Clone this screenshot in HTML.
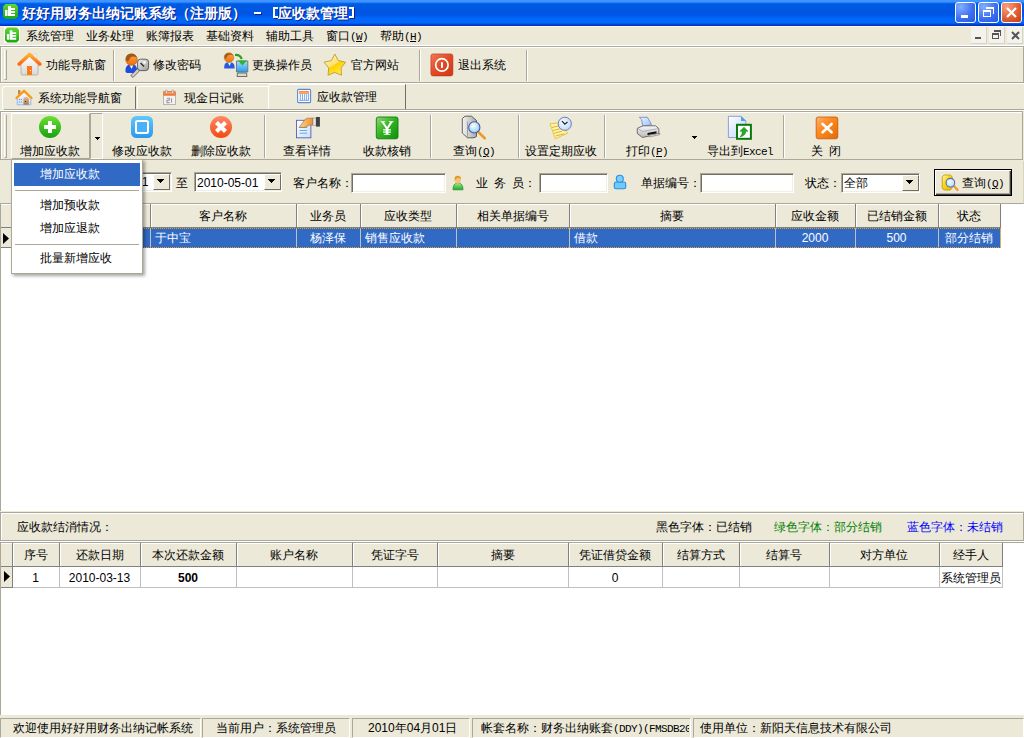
<!DOCTYPE html>
<html><head><meta charset="utf-8">
<style>
*{box-sizing:border-box}
html,body{margin:0;padding:0}
body{width:1024px;height:738px;overflow:hidden;position:relative;background:#ECE9D8;font-family:"Liberation Sans",sans-serif;font-size:12px;color:#000;line-height:12px}
.a{position:absolute;white-space:nowrap}
#title{left:0;top:0;width:1024px;height:26px;background:linear-gradient(to bottom,#4293ff 0px,#4293ff 2px,#0072ff 3px,#005be0 4px,#0058e0 8px,#0055e5 15px,#0060f5 17px,#0068f8 19px,#0066f5 23px,#0035c8 25px,#0035c8 26px)}
#title .t{left:22px;top:6px;color:#fff;font-weight:bold;font-size:14px;line-height:14px;text-shadow:1px 1px 0 #0a1e8c}
.tb{top:2px;width:21px;height:21px;border:1px solid #fff;border-radius:3px}
.menu .a{top:30px}
.h{font-family:"Liberation Mono",monospace;font-size:11px;letter-spacing:-0.6px}
.sep{width:2px;border-left:1px solid #aca899;border-right:1px solid #fff}
.tab{height:23px;border-left:1px solid #fff;border-top:1px solid #fff;border-right:1px solid #716f64;border-radius:3px 0 0 0;background:#ECE9D8}
.hd{background:#ECE9D8;border-right:1px solid #808080;border-bottom:1px solid #808080;box-shadow:inset 1px 1px 0 #fff;text-align:center;line-height:23px;height:24px}
.cell{height:21px;line-height:20px;border-right:1px solid #c0c0c0;padding-left:4px}
.inp{background:#fff;border:1px solid #7f9db9;box-shadow:inset 1px 1px 0 #808080}
.sunk{border:1px solid;border-color:#aca899 #fff #fff #aca899;box-shadow:inset 1px 1px 0 #716f64,inset -1px -1px 0 #f1efe2;background:#fff}
.cbtn{background:#ECE9D8;border:1px solid;border-color:#fff #716f64 #716f64 #fff}
.arr{width:0;height:0;border-left:4px solid transparent;border-right:4px solid transparent;border-top:4px solid #000}
.sb{top:718px;height:20px;border:1px solid;border-color:#aca899 #fff #fff #aca899}
.c{display:inline-block;width:1em;text-align:center;font-style:normal}
.s{display:inline-block;width:0.5em}
</style></head><body>

<!-- Title bar -->
<div id="title" class="a">
  <svg class="a" style="left:3px;top:4px" width="15" height="15" viewBox="0 0 15 15"><defs><linearGradient id="ap" x1="0" y1="0" x2="0" y2="1"><stop offset="0" stop-color="#60d830"/><stop offset="1" stop-color="#18a810"/></linearGradient></defs><path d="M2.5 0H12.5L15 2.5V12.5L12.5 15H2.5L0 12.5V2.5Z" fill="url(#ap)"/><rect x="2" y="6" width="2.5" height="6" fill="#fff"/><path d="M5 2H8V4H12V6H8V7H12V9H8V10H12V12H5Z" fill="#fff"/></svg>
  <div class="a t" style="left:22px"><i class="c">好</i><i class="c">好</i><i class="c">用</i><i class="c">财</i><i class="c">务</i><i class="c">出</i><i class="c">纳</i><i class="c">记</i><i class="c">账</i><i class="c">系</i><i class="c">统</i><i class="c">（</i><i class="c">注</i><i class="c">册</i><i class="c">版</i><i class="c">）</i></div><div class="a" style="left:254px;top:12px;width:7px;height:2px;background:#fff;box-shadow:1px 1px 0 #0a1e8c"></div><div class="a" style="left:273px;top:7px;width:5px;height:11px;border:2px solid #fff;border-right:none;box-shadow:1px 1px 0 #0a1e8c"></div><div class="a t" style="left:278px"><i class="c">应</i><i class="c">收</i><i class="c">款</i><i class="c">管</i><i class="c">理</i></div><div class="a" style="left:349px;top:7px;width:5px;height:11px;border:2px solid #fff;border-left:none;box-shadow:1px 1px 0 #0a1e8c"></div>
  <div class="a tb" style="left:955px;background:radial-gradient(circle at 25% 20%,#80b0ff,#3a6cf0 60%,#2a58e0)"><div class="a" style="left:5px;top:12px;width:7px;height:3px;background:#fff"></div></div>
  <div class="a tb" style="left:978px;background:radial-gradient(circle at 25% 20%,#80b0ff,#3a6cf0 60%,#2a58e0)"><div class="a" style="left:7px;top:4px;width:8px;height:7px;border:1px solid #fff;border-top-width:2px;border-left:none;border-bottom:none"></div><div class="a" style="left:4px;top:7px;width:8px;height:7px;border:1px solid #fff;border-top-width:2px"></div></div>
  <div class="a tb" style="left:1001px;background:radial-gradient(circle at 25% 20%,#f8a080,#e05a30 60%,#c83c10)"><svg class="a" style="left:3px;top:3px" width="13" height="13"><path d="M2 2L11 11M11 2L2 11" stroke="#fff" stroke-width="2.2"/></svg></div>
</div>
<div class="a" style="left:0;top:26px;width:1024px;height:1px;background:#fff5dc"></div>

<!-- Menu bar -->
<div class="menu">
  <div class="a" style="left:4px;top:27px;width:16px;height:16px;background:#fff"></div>
  <svg class="a" style="left:5px;top:27px" width="14" height="16" viewBox="0 0 15 16"><path d="M2.5 0H12.5L15 2.5V13.5L12.5 16H2.5L0 13.5V2.5Z" fill="url(#ap)"/><rect x="2" y="7" width="2.5" height="6" fill="#fff"/><path d="M5 3H8V5H12V7H8V8H12V10H8V11H12V13H5Z" fill="#fff"/></svg>
  <div class="a" style="left:26px"><i class="c">系</i><i class="c">统</i><i class="c">管</i><i class="c">理</i></div>
  <div class="a" style="left:86px"><i class="c">业</i><i class="c">务</i><i class="c">处</i><i class="c">理</i></div>
  <div class="a" style="left:146px"><i class="c">账</i><i class="c">簿</i><i class="c">报</i><i class="c">表</i></div>
  <div class="a" style="left:206px"><i class="c">基</i><i class="c">础</i><i class="c">资</i><i class="c">料</i></div>
  <div class="a" style="left:266px"><i class="c">辅</i><i class="c">助</i><i class="c">工</i><i class="c">具</i></div>
  <div class="a" style="left:326px"><i class="c">窗</i><i class="c">口</i><span class="h">(<u>W</u>)</span></div>
  <div class="a" style="left:380px"><i class="c">帮</i><i class="c">助</i><span class="h">(<u>H</u>)</span></div>
  <div class="a" style="left:971px;top:27px;width:16px;height:17px;background:#f3f2ec;border-right:1px solid #d8d4c4;border-bottom:1px solid #d8d4c4"><div class="a" style="left:4px;top:10px;width:6px;height:2px;background:#555"></div></div>
  <div class="a" style="left:989px;top:27px;width:16px;height:17px;background:#f3f2ec;border-right:1px solid #d8d4c4;border-bottom:1px solid #d8d4c4"><div class="a" style="left:5px;top:3px;width:7px;height:6px;border:1px solid #555;border-top-width:2px;border-left:none;border-bottom:none"></div><div class="a" style="left:3px;top:6px;width:7px;height:6px;border:1px solid #555;border-top-width:2px;background:#f3f2ec"></div></div>
  <div class="a" style="left:1007px;top:27px;width:16px;height:17px;background:#f3f2ec;border-right:1px solid #d8d4c4;border-bottom:1px solid #d8d4c4"><svg class="a" style="left:4px;top:4px" width="9" height="9"><path d="M1 1L8 8M8 1L1 8" stroke="#555" stroke-width="2"/></svg></div>
</div>

<!-- Toolbar 1 -->
<div class="a" style="left:0;top:45px;width:1024px;height:1px;background:#fff"></div>
<div class="a" style="left:0;top:46px;width:1024px;height:1px;background:#aca899"></div>
<div class="a" style="left:0;top:47px;width:1024px;height:1px;background:#fff"></div>
<div id="tb1">
  <div class="a" style="left:0;top:46px;width:1024px;height:37px;border:1px solid #aca899;border-right-color:#aca899;box-shadow:inset 1px 1px 0 #fff"></div>
  <div class="a" style="left:0;top:83px;width:1024px;height:1px;background:#fff"></div>
  <div class="a" style="left:4px;top:50px;width:3px;height:30px;border-left:1px solid #fff;border-right:1px solid #aca899;border-bottom:1px solid #aca899"></div>
  <!-- house -->
  <svg class="a" style="left:17px;top:52px" width="25" height="24" viewBox="0 0 25 24"><defs><linearGradient id="hbody" x1="0" y1="0" x2="0" y2="1"><stop offset="0" stop-color="#ffffff"/><stop offset="1" stop-color="#d8d8d8"/></linearGradient><linearGradient id="hroof" x1="0" y1="0" x2="0" y2="1"><stop offset="0" stop-color="#ffb030"/><stop offset="1" stop-color="#ff6a10"/></linearGradient></defs><rect x="16.5" y="2" width="3" height="6" fill="#f4f4f4" stroke="#d0d0d0" stroke-width="0.6"/><path d="M4 11.5L12.5 4L21 11.5V21.5Q21 23 19.5 23H5.5Q4 23 4 21.5Z" fill="url(#hbody)" stroke="#a8a8a8" stroke-width="0.8"/><path d="M2.2 12L12.5 2.5L22.8 12" fill="none" stroke="url(#hroof)" stroke-width="3.6" stroke-linecap="round" stroke-linejoin="round"/><rect x="10" y="14" width="5" height="9" fill="#ff7a18"/><rect x="13" y="18" width="1" height="1" fill="#fff"/></svg>
  <div class="a" style="left:46px;top:59px"><i class="c">功</i><i class="c">能</i><i class="c">导</i><i class="c">航</i><i class="c">窗</i></div>
  <div class="a sep" style="left:113px;top:50px;height:31px"></div>
  <!-- key person -->
  <svg class="a" style="left:124px;top:52px" width="26" height="26" viewBox="0 0 26 26"><defs><linearGradient id="kh" x1="0" y1="0" x2="1" y2="1"><stop offset="0" stop-color="#f4f4f4"/><stop offset="1" stop-color="#9a9a9a"/></linearGradient><linearGradient id="og" x1="0" y1="0" x2="0" y2="1"><stop offset="0" stop-color="#ffa838"/><stop offset="1" stop-color="#f06a10"/></linearGradient></defs><path d="M1.5 20Q1 13.5 5 12.8H10Q13.5 13.5 13 20L11 21H3Z" fill="#1e4ee0"/><path d="M5.5 12.8L7.5 17L9.5 12.8Z" fill="#fff"/><circle cx="7.5" cy="7.6" r="5.8" fill="url(#og)" stroke="#a86010" stroke-width="0.6"/><path d="M1.8 8Q1.5 1.5 7.5 1.8Q12 2 12.8 5.5Q9.5 3.8 6.5 5.2Q5.5 8 3.8 9.5Z" fill="#a05818"/><path d="M15 15L6.8 23.6L9 25.5L17.2 17Z" fill="#d0d0d0" stroke="#404040" stroke-width="0.7"/><rect x="13.6" y="7.2" width="11" height="11.4" rx="3" fill="url(#kh)" stroke="#404040" stroke-width="0.8"/><path d="M16.5 11L20 14.5" stroke="#303030" stroke-width="1.4"/><circle cx="20.5" cy="10.5" r="1.3" fill="#fff"/></svg>
  <div class="a" style="left:153px;top:59px"><i class="c">修</i><i class="c">改</i><i class="c">密</i><i class="c">码</i></div>
  <!-- change op -->
  <svg class="a" style="left:220px;top:50px" width="30" height="28" viewBox="0 0 30 28"><defs><linearGradient id="scr" x1="0" y1="0" x2="0" y2="1"><stop offset="0" stop-color="#a8dcfc"/><stop offset="1" stop-color="#20a0f0"/></linearGradient><linearGradient id="og2" x1="0" y1="0" x2="0" y2="1"><stop offset="0" stop-color="#ffa838"/><stop offset="1" stop-color="#f07010"/></linearGradient></defs><path d="M4.2 18.5Q4 13 7 12.6H11.5Q14.8 13 14.6 18.5Z" fill="#2a58e0"/><path d="M8 12.6L9.5 16L11 12.6Z" fill="#fff"/><circle cx="9" cy="7.6" r="4.8" fill="url(#og2)" stroke="#b07020" stroke-width="0.5"/><path d="M4.3 8Q4 2.8 9 2.9Q12.5 3 13.5 5.5Q10.5 4.2 8 5.5Q7 7.5 5.5 9Z" fill="#a86020"/><path d="M16.5 11H27.8V22H16.5Z" fill="url(#scr)" stroke="#707070" stroke-width="0.9"/><path d="M17.5 23H26.5L27 26.5H17Z" fill="#d8d8d8" stroke="#505050" stroke-width="0.8"/><path d="M15 5Q20 4.5 21.8 9" fill="none" stroke="#28a028" stroke-width="2.2"/><path d="M17.8 10.5H26.8L22.4 15.6Z" fill="#30b030"/></svg>
  <div class="a" style="left:252px;top:59px"><i class="c">更</i><i class="c">换</i><i class="c">操</i><i class="c">作</i><i class="c">员</i></div>
  <!-- star -->
  <svg class="a" style="left:320px;top:50px" width="30" height="28" viewBox="0 0 30 28"><defs><linearGradient id="stg" x1="0.2" y1="0.1" x2="0.7" y2="0.9"><stop offset="0" stop-color="#fff4b0"/><stop offset="0.5" stop-color="#fce070"/><stop offset="0.55" stop-color="#ffd000"/><stop offset="1" stop-color="#ffe840"/></linearGradient></defs><path d="M14.8 4L18.3 10.6L25.6 12.2L21.1 17.9L21.5 25.2L14.8 22.4L8.1 25.2L8.7 17.9L4 12.2L11.4 10.6Z" fill="url(#stg)" stroke="#c09a38" stroke-width="0.9" stroke-linejoin="round"/></svg>
  <div class="a" style="left:351px;top:59px"><i class="c">官</i><i class="c">方</i><i class="c">网</i><i class="c">站</i></div>
  <div class="a sep" style="left:419px;top:50px;height:31px"></div>
  <!-- exit -->
  <svg class="a" style="left:426px;top:50px" width="32" height="30" viewBox="0 0 32 30"><defs><linearGradient id="exg" x1="0" y1="0" x2="1" y2="1"><stop offset="0" stop-color="#f07858"/><stop offset="0.5" stop-color="#e04a28"/><stop offset="1" stop-color="#d03810"/></linearGradient></defs><rect x="4.9" y="3.9" width="22" height="22" rx="2.2" fill="url(#exg)" stroke="#b83010" stroke-width="0.6"/><circle cx="15.9" cy="14.9" r="6.2" fill="none" stroke="#fff" stroke-width="1.7"/><rect x="15" y="12.2" width="1.9" height="5.7" fill="#fff"/></svg>
  <div class="a" style="left:458px;top:59px"><i class="c">退</i><i class="c">出</i><i class="c">系</i><i class="c">统</i></div>
  <div class="a sep" style="left:526px;top:50px;height:31px"></div>
</div>

<!-- Tabs -->
<div id="tabs">
  <div class="a tab" style="left:2px;top:86px;width:134px"></div>
  <svg class="a" style="left:10px;top:84px" width="30" height="24" viewBox="0 0 30 24"><defs><linearGradient id="t1b" x1="0" y1="0" x2="0" y2="1"><stop offset="0" stop-color="#f4f8fe"/><stop offset="1" stop-color="#d0e4fa"/></linearGradient><linearGradient id="t1d" x1="0" y1="0" x2="0" y2="1"><stop offset="0" stop-color="#e8b888"/><stop offset="1" stop-color="#b07848"/></linearGradient></defs><rect x="8" y="6" width="2.4" height="4.5" fill="#c08858"/><path d="M7.2 13L14 7.5L20.8 13V20.8H7.2Z" fill="url(#t1b)" stroke="#7ab0f0" stroke-width="0.8"/><path d="M6.5 14L14 6.8L21.5 14" fill="none" stroke="#ff9a10" stroke-width="2.4" stroke-linecap="round" stroke-linejoin="round"/><path d="M13.4 20.8V15.5Q13.4 13 16.1 13Q18.9 13 18.9 15.5V20.8Z" fill="url(#t1d)"/><circle cx="15.5" cy="17.5" r="0.6" fill="#402010"/><path d="M9.4 15v1M11.4 15v1M9.4 17.5v1M11.4 17.5v1" stroke="#5070a0" stroke-width="0.9"/></svg>
  <div class="a" style="left:38px;top:92px"><i class="c">系</i><i class="c">统</i><i class="c">功</i><i class="c">能</i><i class="c">导</i><i class="c">航</i><i class="c">窗</i></div>
  <div class="a tab" style="left:137px;top:86px;width:132px"></div>
  <svg class="a" style="left:155px;top:84px" width="30" height="24" viewBox="0 0 30 24"><rect x="8.5" y="9" width="12" height="11.5" fill="#f4f2ea" stroke="#b4b4bc" stroke-width="1"/><rect x="8.1" y="7" width="12.7" height="4.7" rx="1" fill="#f07838"/><rect x="9.5" y="8.3" width="10" height="1.2" fill="#ffb080"/><rect x="10.6" y="6" width="1.8" height="3.5" rx="0.9" fill="#e8e8e8" stroke="#909098" stroke-width="0.6"/><rect x="16.8" y="6" width="1.8" height="3.5" rx="0.9" fill="#e8e8e8" stroke="#909098" stroke-width="0.6"/><path d="M12 14.2H14.3V16.3H12V18.6H14.5M16.5 14.2V18.8" fill="none" stroke="#9898a8" stroke-width="1.1"/></svg>
  <div class="a" style="left:184px;top:92px"><i class="c">现</i><i class="c">金</i><i class="c">日</i><i class="c">记</i><i class="c">账</i></div>
  <div class="a tab" style="left:268px;top:84px;width:138px;height:25px"></div>
  <svg class="a" style="left:290px;top:84px" width="30" height="24" viewBox="0 0 30 24"><rect x="7.6" y="5.4" width="13" height="13.2" rx="1" fill="#fafcff" stroke="#5a8ad8" stroke-width="1.1"/><rect x="9.1" y="7" width="9.8" height="2.8" fill="#ff8a40"/><rect x="10" y="7.9" width="8" height="0.8" fill="#ffb070"/><path d="M10.4 9.8V16.3M12.5 9.8V16.3M14.6 9.8V16.3M16.6 9.8V16.3M18.6 9.8V16.3M9.2 16.4H19" stroke="#78a0e0" stroke-width="0.9"/></svg>
  <div class="a" style="left:317px;top:91px"><i class="c">应</i><i class="c">收</i><i class="c">款</i><i class="c">管</i><i class="c">理</i></div>
  <div class="a" style="left:4px;top:109px;width:1020px;height:1px;background:#aca899"></div>
</div>

<!-- Toolbar 2 -->
<div id="tb2">
  <div class="a" style="left:0;top:110px;width:1024px;height:1px;background:#fff"></div><div class="a" style="left:0;top:111px;width:1023px;height:49px;border:1px solid #aca899;box-shadow:inset 1px 1px 0 #fff"></div>
  <div class="a" style="left:4px;top:115px;width:3px;height:43px;border-left:1px solid #fff;border-right:1px solid #aca899;border-bottom:1px solid #aca899"></div>
  <!-- pressed add button -->
  <div class="a" style="left:11px;top:113px;width:79px;height:46px;border:1px solid;border-color:#fff #aca899 #aca899 #fff"></div>
  <div class="a" style="left:90px;top:113px;width:13px;height:46px;border:1px solid;border-color:#aca899 #fff #fff #aca899"></div>
  <svg class="a" style="left:95px;top:137px" width="5" height="3" shape-rendering="crispEdges"><path d="M0 0h5v1h-1v1h-1v1h-1v-1h-1v-1h-1z"/></svg>
  <svg class="a" style="left:33px;top:112px" width="35" height="30" viewBox="0 0 35 30"><defs><linearGradient id="gp" x1="0" y1="0" x2="0" y2="1"><stop offset="0" stop-color="#6ce030"/><stop offset="1" stop-color="#18a010"/></linearGradient></defs><circle cx="17" cy="15" r="11" fill="url(#gp)"/><rect x="11" y="13" width="12" height="4" fill="#fff"/><rect x="15" y="9" width="4" height="12" fill="#fff"/></svg>
  <div class="a" style="left:20px;top:145px"><i class="c">增</i><i class="c">加</i><i class="c">应</i><i class="c">收</i><i class="c">款</i></div>
  <!-- modify -->
  <svg class="a" style="left:131px;top:116px" width="23" height="23" viewBox="0 0 23 23"><defs><linearGradient id="mb" x1="0" y1="0" x2="0" y2="1"><stop offset="0" stop-color="#60c8ff"/><stop offset="1" stop-color="#2a98f0"/></linearGradient></defs><rect x="0" y="0" width="22" height="22" rx="5.5" fill="url(#mb)"/><rect x="5" y="5" width="12" height="12" rx="1.5" fill="#4cb0f8" stroke="#fff" stroke-width="2"/></svg>
  <div class="a" style="left:112px;top:145px"><i class="c">修</i><i class="c">改</i><i class="c">应</i><i class="c">收</i><i class="c">款</i></div>
  <!-- delete -->
  <svg class="a" style="left:204px;top:112px" width="35" height="30" viewBox="0 0 35 30"><defs><linearGradient id="rd" x1="0" y1="0" x2="0" y2="1"><stop offset="0" stop-color="#ff8a68"/><stop offset="1" stop-color="#f04a10"/></linearGradient></defs><circle cx="17" cy="15" r="11" fill="url(#rd)"/><path d="M12.5 10.5L21.5 19.5M21.5 10.5L12.5 19.5" stroke="#fff" stroke-width="4.2"/></svg>
  <div class="a" style="left:191px;top:145px"><i class="c">删</i><i class="c">除</i><i class="c">应</i><i class="c">收</i><i class="c">款</i></div>
  <div class="a sep" style="left:264px;top:115px;height:43px"></div>
  <!-- detail -->
  <svg class="a" style="left:290px;top:112px" width="35" height="30" viewBox="0 0 35 30"><defs><linearGradient id="dc" x1="0" y1="0" x2="1" y2="1"><stop offset="0" stop-color="#ffffff"/><stop offset="1" stop-color="#c8e0f8"/></linearGradient><linearGradient id="hd" x1="0" y1="0" x2="1" y2="0"><stop offset="0" stop-color="#f8d890"/><stop offset="1" stop-color="#f09030"/></linearGradient></defs><rect x="6.5" y="8.3" width="14.4" height="17.5" fill="url(#dc)" stroke="#5060c0" stroke-width="0.9"/><path d="M9.5 15.5H17M9.5 18.5H17M9.5 21.2H17" stroke="#68a8f0" stroke-width="1"/><path d="M9 15.5L15.5 7L17.5 6.2H23V13H19.5L16 15.2Z" fill="url(#hd)" stroke="#a86020" stroke-width="0.6"/><rect x="23" y="6" width="3" height="7.4" fill="#e8e8e8" stroke="#808080" stroke-width="0.5"/><rect x="26" y="5" width="3.9" height="9.6" fill="#404040"/></svg>
  <div class="a" style="left:283px;top:145px"><i class="c">查</i><i class="c">看</i><i class="c">详</i><i class="c">情</i></div>
  <!-- verify -->
  <svg class="a" style="left:370px;top:112px" width="35" height="30" viewBox="0 0 35 30"><defs><linearGradient id="yg" x1="0" y1="0" x2="1" y2="1"><stop offset="0" stop-color="#90d870"/><stop offset="0.5" stop-color="#30b020"/><stop offset="1" stop-color="#109010"/></linearGradient></defs><rect x="6.3" y="5" width="21.7" height="21.8" rx="2" fill="url(#yg)" stroke="#0a800a" stroke-width="0.9"/><path d="M10.6 9.2H15.2V9.9L13.9 10.1L17.1 15L20.1 10.1L18.8 9.9V9.2H23.6V9.9L22.5 10.2L18.4 16.4V17.2H21V18.4H18.4V19.6H21V20.8H18.4V22H20.4V22.8H13.7V22H15.7V20.8H13.1V19.6H15.7V18.4H13.1V17.2H15.7V16.5L11.6 10.2L10.6 9.9Z" fill="#fff"/></svg>
  <div class="a" style="left:363px;top:145px"><i class="c">收</i><i class="c">款</i><i class="c">核</i><i class="c">销</i></div>
  <div class="a sep" style="left:430px;top:115px;height:43px"></div>
  <!-- query -->
  <svg class="a" style="left:456px;top:112px" width="35" height="30" viewBox="0 0 35 30"><defs><linearGradient id="sv" x1="0" y1="0" x2="1" y2="0"><stop offset="0" stop-color="#f4f4f4"/><stop offset="1" stop-color="#a8a8a8"/></linearGradient><radialGradient id="lens" cx="0.4" cy="0.35" r="0.7"><stop offset="0" stop-color="#ffffff"/><stop offset="1" stop-color="#88ccf0"/></radialGradient></defs><path d="M6.3 6.5L9 4.2H15.5L20.5 8.5V24.5L18 25.8H11.5L6.3 21Z" fill="url(#sv)" stroke="#404040" stroke-width="0.8"/><path d="M11.5 9.5V25.5" stroke="#909090" stroke-width="0.8"/><path d="M22.5 20.2L28.8 26.3" stroke="#f09828" stroke-width="2.6" stroke-linecap="round"/><circle cx="18.3" cy="15.4" r="5.6" fill="url(#lens)" stroke="#4858a8" stroke-width="1.1"/></svg>
  <div class="a" style="left:453px;top:145px"><i class="c">查</i><i class="c">询</i><span class="h">(<u>Q</u>)</span></div>
  <div class="a sep" style="left:518px;top:115px;height:43px"></div>
  <!-- set period -->
  <svg class="a" style="left:543px;top:112px" width="35" height="30" viewBox="0 0 35 30"><defs><radialGradient id="clk" cx="0.4" cy="0.4" r="0.7"><stop offset="0" stop-color="#f4faff"/><stop offset="1" stop-color="#b8d8f8"/></radialGradient></defs><path d="M7.1 11.8L14.6 11L24.8 21.1L12.2 26.8Z" fill="#fff4a0" stroke="#e8c030" stroke-width="0.9" stroke-linejoin="round"/><path d="M9 15.5L15.5 14M10.2 18.5L17 16.8M11.2 21.3L19 19.2M12.5 24L21.5 21.7" stroke="#d8b050" stroke-width="1"/><circle cx="21.8" cy="11.8" r="6.6" fill="url(#clk)" stroke="#6870a8" stroke-width="0.9"/><path d="M19 9.2L21.8 12.2L24.5 10" fill="none" stroke="#202020" stroke-width="1.2"/></svg>
  <div class="a" style="left:525px;top:145px"><i class="c">设</i><i class="c">置</i><i class="c">定</i><i class="c">期</i><i class="c">应</i><i class="c">收</i></div>
  <div class="a sep" style="left:604px;top:115px;height:43px"></div>
  <!-- print -->
  <svg class="a" style="left:632px;top:112px" width="35" height="30" viewBox="0 0 35 30"><defs><linearGradient id="pp" x1="0" y1="0" x2="1" y2="1"><stop offset="0" stop-color="#e8f4ff"/><stop offset="1" stop-color="#90c8f8"/></linearGradient><linearGradient id="pb" x1="0" y1="0" x2="0" y2="1"><stop offset="0" stop-color="#f8f8f8"/><stop offset="1" stop-color="#b8b8b8"/></linearGradient></defs><path d="M7.3 5.3H15.5L19.5 12.5L11 14.5L9.5 7.5Z" fill="url(#pp)" stroke="#7878d0" stroke-width="0.8"/><path d="M5.3 16.3L11 13.8H23.5L26.8 16.5V21.8L10.5 25.5L5.3 21.5Z" fill="url(#pb)" stroke="#505050" stroke-width="0.8"/><path d="M5.3 16.3L10.5 19.5L26.8 16.5" fill="none" stroke="#909090" stroke-width="0.6"/><path d="M15.5 21L24.5 19.2V21.5L15.5 23Z" fill="#101010"/><path d="M16.5 23.5L27.8 21.2V22.6L17.5 25Z" fill="#e0e0e0" stroke="#606060" stroke-width="0.5"/></svg>
  <div class="a" style="left:626px;top:145px"><i class="c">打</i><i class="c">印</i><span class="h">(<u>P</u>)</span></div>
  <svg class="a" style="left:692px;top:136px" width="5" height="3" shape-rendering="crispEdges"><path d="M0 0h5v1h-1v1h-1v1h-1v-1h-1v-1h-1z"/></svg>
  <!-- excel -->
  <svg class="a" style="left:722px;top:112px" width="35" height="30" viewBox="0 0 35 30"><defs><linearGradient id="xd" x1="0" y1="0" x2="1" y2="1"><stop offset="0" stop-color="#ffffff"/><stop offset="1" stop-color="#b8d8f8"/></linearGradient></defs><path d="M6.4 4.3H19.2L23.8 8.8V25.5H6.4Z" fill="url(#xd)" stroke="#7888d8" stroke-width="0.8"/><path d="M19 4.3V9H23.8Z" fill="#50a0e8"/><rect x="15" y="12.8" width="13.9" height="14" fill="#fff" stroke="#0a780a" stroke-width="2"/><path d="M22 15.2L26 19.3H23.8Q23.8 23.6 18 24.9Q20.6 22.6 20.3 19.3H17.9Z" fill="#28a828" stroke="#108a10" stroke-width="0.5"/></svg>
  <div class="a" style="left:707px;top:145px"><i class="c">导</i><i class="c">出</i><i class="c">到</i><span class="h">Excel</span></div>
  <div class="a sep" style="left:783px;top:115px;height:43px"></div>
  <!-- close -->
  <svg class="a" style="left:809px;top:112px" width="35" height="30" viewBox="0 0 35 30"><defs><linearGradient id="cg" x1="0" y1="0" x2="1" y2="1"><stop offset="0" stop-color="#ffb070"/><stop offset="0.4" stop-color="#ff8a20"/><stop offset="1" stop-color="#e06a08"/></linearGradient></defs><rect x="7.2" y="5" width="21.6" height="21.8" rx="2" fill="url(#cg)" stroke="#c05808" stroke-width="0.8"/><path d="M13.6 12L22.6 20.3M22.6 12L13.6 20.3" stroke="#fff" stroke-width="2.6" stroke-linecap="round"/></svg>
  <div class="a" style="left:811px;top:145px"><i class="c">关</i><i class="s"></i><i class="c">闭</i></div>
</div>

<!-- Filter bar -->
<div id="filter">
  <div class="a" style="left:0;top:161px;width:1024px;height:43px;border-bottom:1px solid #aca899;border-right:1px solid #d8d4c4"></div>
  <!-- date1 -->
  <div class="a sunk" style="left:84px;top:172px;width:88px;height:20px;overflow:hidden"><div class="a" style="left:2px;top:3px">2010-03-01</div></div>
  <div class="a cbtn" style="left:153px;top:174px;width:17px;height:16px"><svg class="a" style="left:3px;top:4px" width="7" height="4" shape-rendering="crispEdges"><path d="M0 0h7v1h-1v1h-1v1h-1v1h-1v-1h-1v-1h-1v-1h-1z"/></svg></div>
  <div class="a" style="left:176px;top:177px"><i class="c">至</i></div>
  <div class="a sunk" style="left:194px;top:172px;width:88px;height:20px"></div>
  <div class="a" style="left:197px;top:177px">2010-05-01</div>
  <div class="a cbtn" style="left:264px;top:174px;width:17px;height:16px"><svg class="a" style="left:3px;top:4px" width="7" height="4" shape-rendering="crispEdges"><path d="M0 0h7v1h-1v1h-1v1h-1v1h-1v-1h-1v-1h-1v-1h-1z"/></svg></div>
  <div class="a" style="left:293px;top:177px"><i class="c">客</i><i class="c">户</i><i class="c">名</i><i class="c">称</i><i class="c">：</i></div>
  <div class="a sunk" style="left:351px;top:173px;width:95px;height:20px"></div>
  <svg class="a" style="left:445px;top:170px" width="25" height="25" viewBox="0 0 25 25"><defs><linearGradient id="gb" x1="0" y1="0" x2="0" y2="1"><stop offset="0" stop-color="#98f088"/><stop offset="1" stop-color="#20a828"/></linearGradient></defs><path d="M8 19.8Q7.8 13.2 13 13Q18.2 13.2 18 19.8Z" fill="url(#gb)" stroke="#189020" stroke-width="0.7"/><ellipse cx="12.8" cy="9.9" rx="3.1" ry="3.8" fill="#ffbc80"/><path d="M9.6 9.5Q9.3 5.6 12.8 5.8Q16.2 5.8 15.9 9.3Q14.5 7.4 12.3 7.8Q11.2 9.8 9.6 10.2Z" fill="#d8a020"/></svg>
  <div class="a" style="left:476px;top:177px"><i class="c">业</i><i class="s"></i><i class="c">务</i><i class="s"></i><i class="c">员</i><i class="c">：</i></div>
  <div class="a sunk" style="left:539px;top:173px;width:69px;height:20px"></div>
  <svg class="a" style="left:607px;top:170px" width="25" height="25" viewBox="0 0 25 25"><rect x="7.3" y="12" width="11.4" height="6.8" rx="1.8" fill="#70c8fc" stroke="#2a8ee0" stroke-width="1.1"/><circle cx="12.8" cy="8.7" r="3.5" fill="#78d0fc" stroke="#2a8ee0" stroke-width="1.1"/></svg>
  <div class="a" style="left:641px;top:177px"><i class="c">单</i><i class="c">据</i><i class="c">编</i><i class="c">号</i><i class="c">：</i></div>
  <div class="a sunk" style="left:700px;top:173px;width:94px;height:20px"></div>
  <div class="a" style="left:805px;top:177px"><i class="c">状</i><i class="c">态</i><i class="c">：</i></div>
  <div class="a sunk" style="left:841px;top:173px;width:79px;height:20px"></div>
  <div class="a" style="left:844px;top:177px"><i class="c">全</i><i class="c">部</i></div>
  <div class="a cbtn" style="left:902px;top:175px;width:17px;height:16px"><svg class="a" style="left:3px;top:4px" width="7" height="4" shape-rendering="crispEdges"><path d="M0 0h7v1h-1v1h-1v1h-1v1h-1v-1h-1v-1h-1v-1h-1z"/></svg></div>
  <!-- search button -->
  <div class="a" style="left:934px;top:169px;width:78px;height:27px;border:1px solid #000;box-shadow:inset 1px 1px 0 #fff,inset -1px -1px 0 #404040,inset -2px -2px 0 #aca899"></div>
  <svg class="a" style="left:938px;top:170px" width="24" height="24" viewBox="0 0 24 24"><defs><linearGradient id="qy" x1="0" y1="0" x2="1" y2="1"><stop offset="0" stop-color="#fff8c0"/><stop offset="0.4" stop-color="#f8d820"/><stop offset="1" stop-color="#e8b800"/></linearGradient><radialGradient id="ql" cx="0.4" cy="0.4" r="0.7"><stop offset="0" stop-color="#f0fcff"/><stop offset="1" stop-color="#a8dcf8"/></radialGradient></defs><path d="M6 5H12.5L14.2 7V18L12.5 20H6L4.2 18V7Z" fill="url(#qy)" stroke="#c89a10" stroke-width="0.9"/><path d="M15.8 15.8L19.5 20" stroke="#f09838" stroke-width="2.3" stroke-linecap="round"/><circle cx="12.4" cy="12.7" r="4.3" fill="url(#ql)" stroke="#6068b0" stroke-width="1.1"/></svg>
  <div class="a" style="left:962px;top:177px"><i class="c">查</i><i class="c">询</i><span class="h">(<u>Q</u>)</span></div>
</div>

<!-- Upper grid -->
<div class="a" style="left:0;top:204px;width:1024px;height:307px;background:#fff"></div>
<div id="grid1">
<div class="a hd" style="left:0px;top:204px;width:12px;height:24px"></div>
<div class="a hd" style="left:12px;top:204px;width:139px;height:24px"></div>
<div class="a hd" style="left:151px;top:204px;width:146px;height:24px"></div>
<div class="a" style="left:150px;top:210px;width:146px;text-align:center"><i class="c">客</i><i class="c">户</i><i class="c">名</i><i class="c">称</i></div>
<div class="a hd" style="left:297px;top:204px;width:64px;height:24px"></div>
<div class="a" style="left:296px;top:210px;width:64px;text-align:center"><i class="c">业</i><i class="c">务</i><i class="c">员</i></div>
<div class="a hd" style="left:361px;top:204px;width:96px;height:24px"></div>
<div class="a" style="left:360px;top:210px;width:96px;text-align:center"><i class="c">应</i><i class="c">收</i><i class="c">类</i><i class="c">型</i></div>
<div class="a hd" style="left:457px;top:204px;width:113px;height:24px"></div>
<div class="a" style="left:456px;top:210px;width:113px;text-align:center"><i class="c">相</i><i class="c">关</i><i class="c">单</i><i class="c">据</i><i class="c">编</i><i class="c">号</i></div>
<div class="a hd" style="left:570px;top:204px;width:206px;height:24px"></div>
<div class="a" style="left:569px;top:210px;width:206px;text-align:center"><i class="c">摘</i><i class="c">要</i></div>
<div class="a hd" style="left:776px;top:204px;width:80px;height:24px"></div>
<div class="a" style="left:775px;top:210px;width:80px;text-align:center"><i class="c">应</i><i class="c">收</i><i class="c">金</i><i class="c">额</i></div>
<div class="a hd" style="left:856px;top:204px;width:83px;height:24px"></div>
<div class="a" style="left:855px;top:210px;width:83px;text-align:center"><i class="c">已</i><i class="c">结</i><i class="c">销</i><i class="c">金</i><i class="c">额</i></div>
<div class="a hd" style="left:939px;top:204px;width:62px;height:24px"></div>
<div class="a" style="left:938px;top:210px;width:62px;text-align:center"><i class="c">状</i><i class="c">态</i></div>
<div class="a" style="left:0;top:228px;width:12px;height:20px;background:#ECE9D8;border-right:1px solid #808080;border-bottom:1px solid #808080"></div>
<svg class="a" style="left:3px;top:233px" width="6" height="11"><path d="M0 0L6 5.5L0 11Z" fill="#000"/></svg>
<div class="a" style="left:12px;top:228px;width:989px;height:20px;background:#316ac5"></div>
<div class="a" style="left:150px;top:228px;width:1px;height:20px;background:#c0c0c0"></div>
<div class="a" style="left:296px;top:228px;width:1px;height:20px;background:#c0c0c0"></div>
<div class="a" style="left:360px;top:228px;width:1px;height:20px;background:#c0c0c0"></div>
<div class="a" style="left:456px;top:228px;width:1px;height:20px;background:#c0c0c0"></div>
<div class="a" style="left:569px;top:228px;width:1px;height:20px;background:#c0c0c0"></div>
<div class="a" style="left:775px;top:228px;width:1px;height:20px;background:#c0c0c0"></div>
<div class="a" style="left:855px;top:228px;width:1px;height:20px;background:#c0c0c0"></div>
<div class="a" style="left:938px;top:228px;width:1px;height:20px;background:#c0c0c0"></div>
<div class="a" style="left:1000px;top:228px;width:1px;height:20px;background:#c0c0c0"></div>
<div class="a" style="left:12px;top:228px;width:989px;height:20px;border:1px dotted #e8a018"></div>
<div class="a" style="left:155px;top:232px;color:#fff"><i class="c">于</i><i class="c">中</i><i class="c">宝</i></div>
<div class="a" style="left:296px;top:232px;width:64px;text-align:center;color:#fff"><i class="c">杨</i><i class="c">泽</i><i class="c">保</i></div>
<div class="a" style="left:365px;top:232px;color:#fff"><i class="c">销</i><i class="c">售</i><i class="c">应</i><i class="c">收</i><i class="c">款</i></div>
<div class="a" style="left:574px;top:232px;color:#fff"><i class="c">借</i><i class="c">款</i></div>
<div class="a" style="left:775px;top:232px;width:80px;text-align:center;color:#fff">2000</div>
<div class="a" style="left:855px;top:232px;width:83px;text-align:center;color:#fff">500</div>
<div class="a" style="left:938px;top:232px;width:62px;text-align:center;color:#fff"><i class="c">部</i><i class="c">分</i><i class="c">结</i><i class="c">销</i></div>
</div>

<!-- Summary -->
<div id="summary">
  <div class="a" style="left:0;top:512px;width:1024px;height:29px;border:1px solid #aca899;box-shadow:inset 1px 1px 0 #fff;background:#ECE9D8"></div>
  <div class="a" style="left:17px;top:521px"><i class="c">应</i><i class="c">收</i><i class="c">款</i><i class="c">结</i><i class="c">消</i><i class="c">情</i><i class="c">况</i><i class="c">：</i></div>
  <div class="a" style="left:656px;top:521px"><i class="c">黑</i><i class="c">色</i><i class="c">字</i><i class="c">体</i><i class="c">：</i><i class="c">已</i><i class="c">结</i><i class="c">销</i></div>
  <div class="a" style="left:774px;top:521px;color:#008000"><i class="c">绿</i><i class="c">色</i><i class="c">字</i><i class="c">体</i><i class="c">：</i><i class="c">部</i><i class="c">分</i><i class="c">结</i><i class="c">销</i></div>
  <div class="a" style="left:907px;top:521px;color:#0000ff"><i class="c">蓝</i><i class="c">色</i><i class="c">字</i><i class="c">体</i><i class="c">：</i><i class="c">未</i><i class="c">结</i><i class="c">销</i></div>
</div>

<!-- Lower grid -->
<div class="a" style="left:0;top:541px;width:1024px;height:174px;background:#fff"></div>
<div id="grid2">
<div class="a" style="left:0;top:542px;width:1024px;height:1px;background:#aca899"></div>
<div class="a hd" style="left:0px;top:543px;width:13px;height:24px"></div>
<div class="a hd" style="left:13px;top:543px;width:47px;height:24px"></div>
<div class="a" style="left:12px;top:549px;width:47px;text-align:center"><i class="c">序</i><i class="c">号</i></div>
<div class="a hd" style="left:60px;top:543px;width:81px;height:24px"></div>
<div class="a" style="left:59px;top:549px;width:81px;text-align:center"><i class="c">还</i><i class="c">款</i><i class="c">日</i><i class="c">期</i></div>
<div class="a hd" style="left:141px;top:543px;width:96px;height:24px"></div>
<div class="a" style="left:140px;top:549px;width:96px;text-align:center"><i class="c">本</i><i class="c">次</i><i class="c">还</i><i class="c">款</i><i class="c">金</i><i class="c">额</i></div>
<div class="a hd" style="left:237px;top:543px;width:116px;height:24px"></div>
<div class="a" style="left:236px;top:549px;width:116px;text-align:center"><i class="c">账</i><i class="c">户</i><i class="c">名</i><i class="c">称</i></div>
<div class="a hd" style="left:353px;top:543px;width:85px;height:24px"></div>
<div class="a" style="left:352px;top:549px;width:85px;text-align:center"><i class="c">凭</i><i class="c">证</i><i class="c">字</i><i class="c">号</i></div>
<div class="a hd" style="left:438px;top:543px;width:131px;height:24px"></div>
<div class="a" style="left:437px;top:549px;width:131px;text-align:center"><i class="c">摘</i><i class="c">要</i></div>
<div class="a hd" style="left:569px;top:543px;width:94px;height:24px"></div>
<div class="a" style="left:568px;top:549px;width:94px;text-align:center"><i class="c">凭</i><i class="c">证</i><i class="c">借</i><i class="c">贷</i><i class="c">金</i><i class="c">额</i></div>
<div class="a hd" style="left:663px;top:543px;width:77px;height:24px"></div>
<div class="a" style="left:662px;top:549px;width:77px;text-align:center"><i class="c">结</i><i class="c">算</i><i class="c">方</i><i class="c">式</i></div>
<div class="a hd" style="left:740px;top:543px;width:90px;height:24px"></div>
<div class="a" style="left:739px;top:549px;width:90px;text-align:center"><i class="c">结</i><i class="c">算</i><i class="c">号</i></div>
<div class="a hd" style="left:830px;top:543px;width:110px;height:24px"></div>
<div class="a" style="left:829px;top:549px;width:110px;text-align:center"><i class="c">对</i><i class="c">方</i><i class="c">单</i><i class="c">位</i></div>
<div class="a hd" style="left:940px;top:543px;width:63px;height:24px"></div>
<div class="a" style="left:939px;top:549px;width:63px;text-align:center"><i class="c">经</i><i class="c">手</i><i class="c">人</i></div>
<div class="a" style="left:0;top:567px;width:13px;height:21px;background:#ECE9D8;border-right:1px solid #808080;border-bottom:1px solid #808080;box-shadow:inset 1px 0 0 #fff"></div>
<svg class="a" style="left:4px;top:571px" width="6" height="11"><path d="M0 0L6 5.5L0 11Z" fill="#000"/></svg>
<div class="a" style="left:59px;top:567px;width:1px;height:21px;background:#c0c0c0"></div>
<div class="a" style="left:140px;top:567px;width:1px;height:21px;background:#c0c0c0"></div>
<div class="a" style="left:236px;top:567px;width:1px;height:21px;background:#c0c0c0"></div>
<div class="a" style="left:352px;top:567px;width:1px;height:21px;background:#c0c0c0"></div>
<div class="a" style="left:437px;top:567px;width:1px;height:21px;background:#c0c0c0"></div>
<div class="a" style="left:568px;top:567px;width:1px;height:21px;background:#c0c0c0"></div>
<div class="a" style="left:662px;top:567px;width:1px;height:21px;background:#c0c0c0"></div>
<div class="a" style="left:739px;top:567px;width:1px;height:21px;background:#c0c0c0"></div>
<div class="a" style="left:829px;top:567px;width:1px;height:21px;background:#c0c0c0"></div>
<div class="a" style="left:939px;top:567px;width:1px;height:21px;background:#c0c0c0"></div>
<div class="a" style="left:1002px;top:567px;width:1px;height:21px;background:#c0c0c0"></div>
<div class="a" style="left:13px;top:587px;width:990px;height:1px;background:#c0c0c0"></div>
<div class="a" style="left:12px;top:572px;width:47px;text-align:center">1</div>
<div class="a" style="left:59px;top:572px;width:81px;text-align:center">2010-03-13</div>
<div class="a" style="left:140px;top:572px;width:96px;text-align:center"><b>500</b></div>
<div class="a" style="left:568px;top:572px;width:94px;text-align:center">0</div>
<div class="a" style="left:941px;top:572px"><i class="c">系</i><i class="c">统</i><i class="c">管</i><i class="c">理</i><i class="c">员</i></div>
</div>

<div class="a" style="left:0;top:204px;width:1px;height:307px;background:#aca899"></div>
<div class="a" style="left:0;top:542px;width:1px;height:173px;background:#aca899"></div>
<!-- Status bar -->
<div id="status">
  <div class="a sb" style="left:0;width:201px"></div><div class="a" style="left:13px;top:722px"><i class="c">欢</i><i class="c">迎</i><i class="c">使</i><i class="c">用</i><i class="c">好</i><i class="c">好</i><i class="c">用</i><i class="c">财</i><i class="c">务</i><i class="c">出</i><i class="c">纳</i><i class="c">记</i><i class="c">帐</i><i class="c">系</i><i class="c">统</i></div>
  <div class="a sb" style="left:202px;width:148px"></div><div class="a" style="left:216px;top:722px"><i class="c">当</i><i class="c">前</i><i class="c">用</i><i class="c">户</i><i class="c">：</i><i class="c">系</i><i class="c">统</i><i class="c">管</i><i class="c">理</i><i class="c">员</i></div>
  <div class="a sb" style="left:352px;width:118px"></div><div class="a" style="left:368px;top:722px">2010<i class="c">年</i>04<i class="c">月</i>01<i class="c">日</i></div>
  <div class="a sb" style="left:472px;width:219px"></div><div class="a" style="left:481px;top:722px;width:208px;overflow:hidden"><i class="c">帐</i><i class="c">套</i><i class="c">名</i><i class="c">称</i><i class="c">：</i><i class="c">财</i><i class="c">务</i><i class="c">出</i><i class="c">纳</i><i class="c">账</i><i class="c">套</i><span class="h">(DDY)(FMSDB2010)</span></div>
  <div class="a sb" style="left:693px;width:331px"></div><div class="a" style="left:700px;top:722px"><i class="c">使</i><i class="c">用</i><i class="c">单</i><i class="c">位</i><i class="c">：</i><i class="c">新</i><i class="c">阳</i><i class="c">天</i><i class="c">信</i><i class="c">息</i><i class="c">技</i><i class="c">术</i><i class="c">有</i><i class="c">限</i><i class="c">公</i><i class="c">司</i></div>
</div>

<!-- Dropdown menu -->
<div id="dd">
  <div class="a" style="left:11px;top:159px;width:132px;height:115px;background:#fff;border:1px solid #aca899;box-shadow:2px 2px 3px rgba(0,0,0,0.35)"></div>
  <div class="a" style="left:14px;top:163px;width:126px;height:23px;background:#316ac5"></div>
  <div class="a" style="left:40px;top:168px;color:#fff"><i class="c">增</i><i class="c">加</i><i class="c">应</i><i class="c">收</i><i class="c">款</i></div>
  <div class="a" style="left:15px;top:190px;width:124px;height:1px;background:#aca899"></div>
  <div class="a" style="left:40px;top:199px"><i class="c">增</i><i class="c">加</i><i class="c">预</i><i class="c">收</i><i class="c">款</i></div>
  <div class="a" style="left:40px;top:222px"><i class="c">增</i><i class="c">加</i><i class="c">应</i><i class="c">退</i><i class="c">款</i></div>
  <div class="a" style="left:15px;top:244px;width:124px;height:1px;background:#aca899"></div>
  <div class="a" style="left:40px;top:252px"><i class="c">批</i><i class="c">量</i><i class="c">新</i><i class="c">增</i><i class="c">应</i><i class="c">收</i></div>
</div>

</body></html>
